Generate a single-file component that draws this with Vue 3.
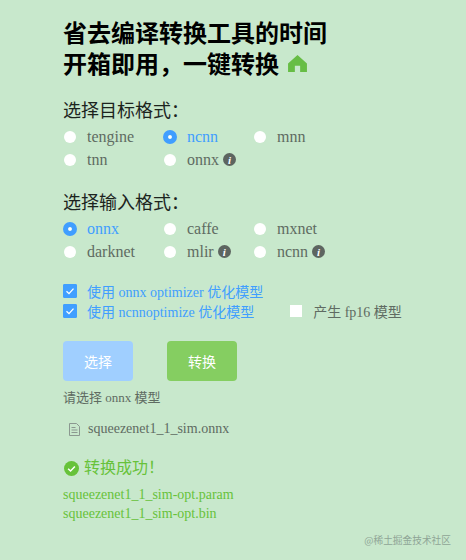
<script setup>
const targets = [
  { name: 'tengine' }, { name: 'ncnn', on: true }, { name: 'mnn' },
  { name: 'tnn' }, { name: 'onnx', info: true }
]
const inputs = [
  { name: 'onnx', on: true }, { name: 'caffe' }, { name: 'mxnet' },
  { name: 'darknet' }, { name: 'mlir', info: true }, { name: 'ncnn', info: true }
]
</script>

<template>
  <main class="page">
    <h1 class="title">
      <span>省去编译转换工具的时间</span>
      <span class="title-line">开箱即用，一键转换
        <svg class="home" viewBox="0 0 20 18"><path d="M10 0 20 9V18H12.8V11.5H7.2V18H0V9Z" /></svg>
      </span>
    </h1>

    <section class="group">
      <h2 class="label">选择目标格式：</h2>
      <div class="radios">
        <div v-for="o in targets" :key="o.name" class="radio" :class="{ on: o.on }">
          <i class="dot"></i><span>{{ o.name }}</span>
          <b v-if="o.info" class="info">i</b>
        </div>
      </div>
    </section>

    <section class="group second">
      <h2 class="label">选择输入格式：</h2>
      <div class="radios">
        <div v-for="o in inputs" :key="o.name" class="radio" :class="{ on: o.on }">
          <i class="dot"></i><span>{{ o.name }}</span>
          <b v-if="o.info" class="info">i</b>
        </div>
      </div>
    </section>

    <section class="checks">
      <div class="check on">
        <i class="box"><svg viewBox="0 0 12 12"><path d="M2.5 6.2 5 8.6 9.5 3.6" /></svg></i>
        <span>使用 onnx optimizer 优化模型</span>
      </div>
      <div class="check-row">
        <div class="check on">
          <i class="box"><svg viewBox="0 0 12 12"><path d="M2.5 6.2 5 8.6 9.5 3.6" /></svg></i>
          <span>使用 ncnnoptimize 优化模型</span>
        </div>
        <div class="check">
          <i class="box"></i>
          <span>产生 fp16 模型</span>
        </div>
      </div>
    </section>

    <div class="buttons">
      <button class="btn pick">选择</button>
      <button class="btn convert">转换</button>
    </div>

    <p class="hint">请选择 onnx 模型</p>
    <div class="file">
      <svg class="file-icon" viewBox="0.5 0.5 11 13"><path d="M1 1H8L11 4V13H1ZM3 5H7M3 7.5H9M3 10H9" /></svg>
      <span>squeezenet1_1_sim.onnx</span>
    </div>

    <div class="success">
      <svg class="ok" viewBox="0 0 16 16"><circle cx="8" cy="8" r="8" /><path d="M4.4 8.2 7 10.7 11.6 5.8" /></svg>
      <span>转换成功！</span>
    </div>
    <div class="outputs">
      <div>squeezenet1_1_sim-opt.param</div>
      <div>squeezenet1_1_sim-opt.bin</div>
    </div>

    <div class="mark">@稀土掘金技术社区</div>
  </main>
</template>

<style scoped>
.page {
  position: relative;
  box-sizing: border-box;
  width: 466px;
  height: 560px;
  padding: 18px 0 0 63px;
  overflow: hidden;
  background: #c8e8cc;
  color: #5f6b62;
  font-family: "Liberation Serif", "Noto Sans CJK SC", serif;
  font-size: 14px;
}
.title {
  display: flex;
  flex-direction: column;
  margin: 0;
  color: #000;
  font-family: "Liberation Sans", "Noto Sans CJK SC", sans-serif;
  font-size: 24px;
  font-weight: 700;
  line-height: 31px;
}
.title-line { display: flex; align-items: center; }
.home { width: 19px; height: 17px; margin: 0 0 3px 9px; fill: #67bd45; }
.group { margin-top: 19px; }
.second { margin-top: 20px; }
.label {
  margin: 0 0 1px;
  color: #1c241e;
  font-family: "Liberation Sans", "Noto Sans CJK SC", sans-serif;
  font-size: 18px;
  font-weight: 400;
  line-height: 25px;
}
.radios {
  display: grid;
  grid-template-columns: 100px 90px 90px;
  grid-auto-rows: 23px;
  font-size: 16px;
}
.radio { display: flex; align-items: center; }
.dot {
  box-sizing: border-box;
  flex: none;
  width: 14px;
  height: 14px;
  margin-right: 10px;
  border: 1px solid transparent;
  border-radius: 50%;
  background: #fff;
  background-clip: padding-box;
}
.radio.on { color: #409eff; }
.radio.on .dot { border: 5px solid #409eff; }
.info {
  display: flex;
  align-items: center;
  justify-content: center;
  width: 13px;
  height: 13px;
  margin-left: 4px;
  border-radius: 50%;
  background: #5d6560;
  color: #fff;
  font-size: 11px;
  font-style: italic;
}
.checks { display: flex; flex-direction: column; gap: 1px; margin-top: 18px; }
.check-row { display: flex; gap: 35px; }
.check {
  display: flex;
  align-items: center;
  height: 19px;
}
.check.on { color: #409eff; }
.box {
  box-sizing: border-box;
  display: block;
  flex: none;
  width: 14px;
  height: 14px;
  margin-right: 10px;
  border: 1px solid transparent;
  border-radius: 1px;
  background: #fff;
  background-clip: padding-box;
}
.check.on .box { border-color: #409eff; background: #409eff; }
.box svg { display: block; fill: none; stroke: #fff; stroke-width: 1.3; }
.buttons { display: flex; gap: 34px; margin-top: 21px; }
.btn {
  width: 70px;
  height: 40px;
  padding: 0;
  border: 1px solid transparent;
  border-radius: 4px;
  color: #fff;
  font-family: "Noto Sans CJK SC", sans-serif;
  font-size: 14px;
}
.pick { background: #a0cfff; }
.convert { background: #85ce61; }
.hint { margin: 7px 0 0; font-size: 13px; line-height: 20px; }
.file { display: flex; align-items: center; height: 22px; margin: 10px 0 0 6px; font-size: 14px; }
.file-icon { width: 11px; height: 13px; margin-right: 8px; fill: none; stroke: #8b9890; stroke-width: 1; }
.success {
  display: flex;
  align-items: center;
  margin-top: 17px;
  color: #67c23a;
  font-size: 16px;
  line-height: 22px;
}
.ok { width: 15px; height: 15px; margin: 0 5px 0 1px; fill: #67c23a; }
.ok path { fill: none; stroke: #fff; stroke-width: 1.6; }
.outputs { margin-top: 6px; color: #67c23a; line-height: 19px; }
.mark {
  position: absolute;
  right: 15px;
  bottom: 13px;
  color: #8fa596;
  font-family: "Noto Sans CJK SC", sans-serif;
  font-size: 9.7px;
}
</style>
